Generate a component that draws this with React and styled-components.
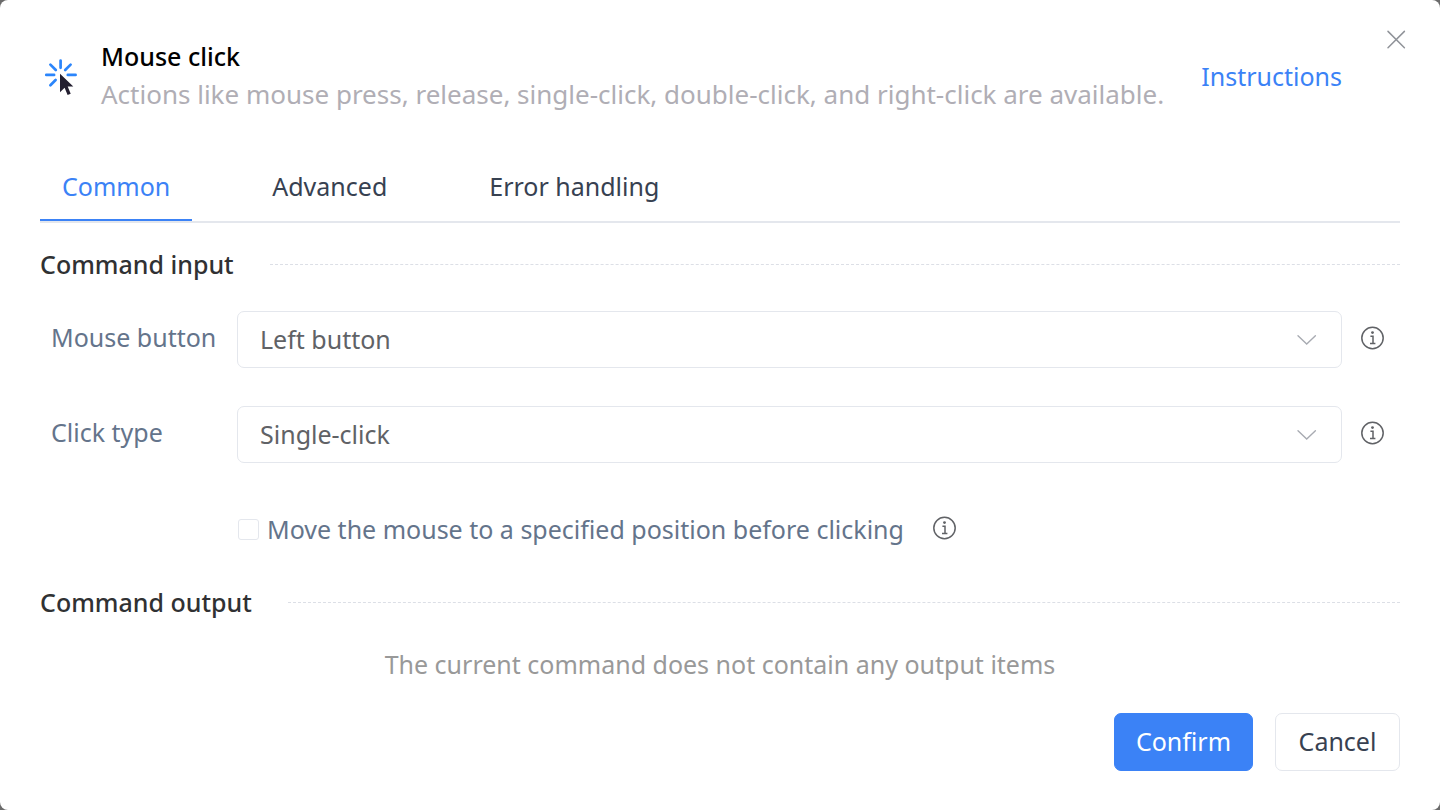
import React, { useState } from "react";
import styled, { createGlobalStyle } from "styled-components";

const GlobalStyle = createGlobalStyle`
  *, *::before, *::after { box-sizing: border-box; }
  body {
    margin: 0;
    background: #6b6b6b;
    font-family: "Noto Sans", "Open Sans", sans-serif;
    font-size: 25px;
    line-height: 38px;
  }
  button, select, input { font: inherit; }
`;

const Dialog = styled.main`
  display: flex;
  flex-direction: column;
  min-height: 100vh;
  padding: 24px 40px 39px;
  border-radius: 8px;
  background: #ffffff;
`;

const Header = styled.header`
  display: flex;
  align-items: flex-start;
`;

const HeaderIcon = styled.svg`
  flex: none;
  width: 40px;
  height: 40px;
  margin: 32px 21px 0 0;
`;

const Heading = styled.div`
  flex: 1;
  min-width: 0;
  padding: 13px 0 1px;
`;

const Title = styled.h1`
  margin: 0;
  font-size: 25px;
  font-weight: 500;
  color: #000000;
`;

const Description = styled.p`
  margin: 0;
  font-size: 26px;
  color: #b0aeb5;
`;

const HelpLink = styled.a`
  margin: 33px 44px 0 0;
  color: #3b82f6;
  text-decoration: none;
`;

const CloseButton = styled.button`
  display: flex;
  flex: none;
  margin: 6px -6px 0 0;
  padding: 0;
  border: 0;
  background: none;
  color: #909399;
  cursor: pointer;
`;

const TabList = styled.div`
  display: flex;
  gap: 58px;
  margin-top: 39px;
  border-bottom: 2px solid #e4e7ed;
`;

const Tab = styled.button`
  padding: 14px 22px;
  border: 0;
  border-bottom: 2px solid ${(p) => (p.$active ? "#3b82f6" : "transparent")};
  background: none;
  color: ${(p) => (p.$active ? "#3b82f6" : "#374151")};
  cursor: pointer;
`;

const SectionTitle = styled.h2`
  display: flex;
  align-items: center;
  gap: 36px;
  margin: ${(p) => p.$top}px 0 0;
  font-size: 25px;
  font-weight: 500;
  color: #303133;

  &::after {
    content: "";
    flex: 1;
    border-top: 1px dashed #dcdfe6;
  }
`;

const Fields = styled.div`
  display: grid;
  grid-template-columns: 186px 1fr 24px;
  column-gap: 0;
  row-gap: 38px;
  align-items: center;
  margin-top: 28px;
  padding: 0 15px 0 11px;
`;

const FieldLabel = styled.label`
  padding-bottom: 6px;
  color: #64748b;
`;

const SelectBox = styled.div`
  display: grid;
  align-items: center;
  margin-right: 19px;

  & > * {
    grid-area: 1 / 1;
  }
`;

const Select = styled.select`
  width: 100%;
  height: 57px;
  padding: 0 60px 2px 22px;
  border: 1px solid #e4e7ed;
  border-radius: 7px;
  appearance: none;
  background: #ffffff;
  color: #606266;
`;

const Chevron = styled.svg`
  justify-self: end;
  width: 20px;
  height: 12px;
  margin-right: 25px;
  pointer-events: none;
`;

const CheckRow = styled.div`
  display: flex;
  align-items: center;
  margin: 47px 0 0 198px;
`;

const CheckLabel = styled.label`
  display: flex;
  align-items: center;
  gap: 8px;
  margin-right: 29px;
  color: #64748b;
`;

const Checkbox = styled.input`
  flex: none;
  width: 21px;
  height: 21px;
  margin: 0;
  border: 1px solid #e4e7ed;
  border-radius: 3px;
  appearance: none;
  background: #ffffff;

  &:checked {
    background: #3b82f6;
  }
`;

const Empty = styled.p`
  margin: 24px 0 0;
  color: #999999;
  text-align: center;
`;

const Footer = styled.footer`
  display: flex;
  justify-content: flex-end;
  gap: 22px;
  margin-top: auto;
`;

const ActionButton = styled.button`
  min-width: ${(p) => (p.$primary ? 139 : 125)}px;
  height: 58px;
  padding: 0 20px 2px;
  border: 1px solid ${(p) => (p.$primary ? "#3b82f6" : "#e4e7ed")};
  border-radius: 7px;
  background: ${(p) => (p.$primary ? "#3b82f6" : "#ffffff")};
  color: ${(p) => (p.$primary ? "#ffffff" : "#374151")};
  cursor: pointer;
`;

const InfoSvg = styled.svg`
  flex: none;
  display: block;
  width: 24px;
  height: 24px;
  margin-bottom: 3px;
`;

function InfoIcon() {
  return (
    <InfoSvg viewBox="0 0 24 24" fill="none" stroke="#606266" strokeWidth="1.5" role="img" aria-label="More information">
      <circle cx="11.5" cy="12" r="10.7" />
      <path d="M9.4 10.2h2.6v7.4M9 17.6h5.4" />
      <circle cx="11.5" cy="6.6" r="1.4" fill="#606266" stroke="none" />
    </InfoSvg>
  );
}

function SelectField({ id, label, options }) {
  return (
    <>
      <FieldLabel htmlFor={id}>{label}</FieldLabel>
      <SelectBox>
        <Select id={id}>
          {options.map((o) => (
            <option key={o}>{o}</option>
          ))}
        </Select>
        <Chevron viewBox="0 0 20 12" fill="none" stroke="#a8abb2" strokeWidth="1.4" strokeLinecap="round" aria-hidden="true">
          <path d="M1 1.8 9.7 10l8.7-8.2" />
        </Chevron>
      </SelectBox>
      <InfoIcon />
    </>
  );
}

const tabs = ["Common", "Advanced", "Error handling"];

export default function App() {
  const [active, setActive] = useState("Common");
  return (
    <>
      <GlobalStyle />
      <Dialog>
        <Header>
          <HeaderIcon viewBox="0 0 40 40" aria-hidden="true">
            <path
              d="M20.6 4.6v7.2M10.4 8.6l5.4 5.4M30.6 8.6l-5.4 5.4M6.3 18.9h7.8M27.8 18.9h7.8M15.6 24l-5.2 5.2"
              fill="none"
              stroke="#2b85fb"
              strokeWidth="2.7"
              strokeLinecap="round"
            />
            <path d="M20 17.8v18.4l4.6-4.4 3 7.3 3.1-1.3-3-7.2h5.6Z" fill="#231f30" />
          </HeaderIcon>
          <Heading>
            <Title>Mouse click</Title>
            <Description>
              Actions like mouse press, release, single-click, double-click, and right-click are available.
            </Description>
          </Heading>
          <HelpLink href="#instructions">Instructions</HelpLink>
          <CloseButton aria-label="Close">
            <svg width="20" height="20" viewBox="0 0 20 20" fill="none" stroke="currentColor" strokeWidth="1.5" strokeLinecap="round">
              <path d="m2 1.4 16.4 16.4M18.4 1.4 2 17.8" />
            </svg>
          </CloseButton>
        </Header>

        <TabList role="tablist">
          {tabs.map((name) => (
            <Tab key={name} role="tab" aria-selected={active === name} $active={active === name} onClick={() => setActive(name)}>
              {name}
            </Tab>
          ))}
        </TabList>

        <SectionTitle $top={22}>Command input</SectionTitle>
        <Fields>
          <SelectField id="mouse-button" label="Mouse button" options={["Left button", "Right button", "Middle button"]} />
          <SelectField id="click-type" label="Click type" options={["Single-click", "Double-click", "Press", "Release"]} />
        </Fields>
        <CheckRow>
          <CheckLabel>
            <Checkbox type="checkbox" />
            Move the mouse to a specified position before clicking
          </CheckLabel>
          <InfoIcon />
        </CheckRow>

        <SectionTitle $top={35}>Command output</SectionTitle>
        <Empty>The current command does not contain any output items</Empty>

        <Footer>
          <ActionButton $primary>Confirm</ActionButton>
          <ActionButton>Cancel</ActionButton>
        </Footer>
      </Dialog>
    </>
  );
}
